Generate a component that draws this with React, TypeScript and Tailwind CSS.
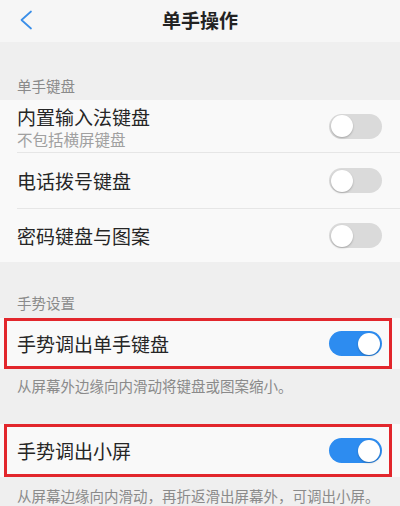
import React from 'react';

const font = { fontFamily: '"Noto Sans CJK SC", "Noto Sans", sans-serif' };

function Toggle({ on }: { on: boolean }) {
  return (
    <div
      className={`relative w-[53px] h-[25px] rounded-full flex items-center px-[2px] ${
        on ? 'bg-[#2d8cf0] justify-end' : 'bg-[#dadada] justify-start'
      }`}
    >
      <div className="w-[22px] h-[22px] rounded-full bg-white shadow-[0_1px_2px_rgba(0,0,0,0.25)]" />
    </div>
  );
}

function GestureRow({ label, heightClass }: { label: string; heightClass: string }) {
  return (
    <div className={`relative ${heightClass} bg-[#f9f9f9] flex items-center justify-between pl-[17px] pr-[18px]`}>
      <span className="text-[19px] leading-[24px] text-[#262626]">{label}</span>
      <Toggle on />
      {/* annotation box */}
      <div className="absolute left-[4px] right-[8px] top-0 bottom-0 border-[3px] border-[#e2262c] pointer-events-none" />
    </div>
  );
}

export default function App() {
  return (
    <div className="w-[400px] h-[506px] overflow-hidden bg-[#efefef]" style={font}>
      {/* Header */}
      <div className="relative h-[42px] bg-[#f6f6f6] flex items-center justify-center">
        <svg className="absolute left-[18px] top-[10px] w-[16px] h-[20px]" viewBox="0 0 16 20" fill="none">
          <polyline points="13,1.5 3.5,10 13,18.5" stroke="#3a8ee8" strokeWidth="1.7" strokeLinecap="round" strokeLinejoin="round" />
        </svg>
        <span className="text-[19px] font-bold text-[#222] leading-[24px] -mt-[2px]">单手操作</span>
      </div>

      {/* 单手键盘 */}
      <div className="h-[58px] flex items-end pl-[17px] pb-[4px]">
        <span className="text-[14.5px] leading-[20px] text-[#8a8a8a]">单手键盘</span>
      </div>

      <div className="bg-[#f9f9f9]">
        <div className="h-[53px] flex">
          <div className="flex-1 ml-[17px] flex items-center justify-between pr-[18px] border-b border-[#e6e6e6]">
            <div className="flex flex-col pt-[4px]">
              <span className="text-[19px] leading-[22px] text-[#262626]">内置输入法键盘</span>
              <span className="text-[15.5px] leading-[22px] text-[#a0a0a0]">不包括横屏键盘</span>
            </div>
            <Toggle on={false} />
          </div>
        </div>
        <div className="h-[56px] flex">
          <div className="flex-1 ml-[17px] flex items-center justify-between pr-[18px] border-b border-[#e6e6e6]">
            <span className="text-[19px] leading-[24px] text-[#262626]">电话拨号键盘</span>
            <Toggle on={false} />
          </div>
        </div>
        <div className="h-[53px] flex">
          <div className="flex-1 ml-[17px] flex items-center justify-between pr-[18px]">
            <span className="text-[19px] leading-[24px] text-[#262626]">密码键盘与图案</span>
            <Toggle on={false} />
          </div>
        </div>
      </div>

      {/* 手势设置 */}
      <div className="h-[56px] flex items-end pl-[17px] pb-[5px]">
        <span className="text-[14.5px] leading-[20px] text-[#8a8a8a]">手势设置</span>
      </div>

      <GestureRow label="手势调出单手键盘" heightClass="h-[51px]" />

      <div className="h-[55px] pl-[17px] pt-[7px]">
        <p className="text-[14.5px] leading-[20px] text-[#8a8a8a]">从屏幕外边缘向内滑动将键盘或图案缩小。</p>
      </div>

      <GestureRow label="手势调出小屏" heightClass="h-[53px]" />

      <div className="pl-[17px] pt-[9px]">
        <p className="text-[14.5px] leading-[20px] text-[#8a8a8a] whitespace-nowrap">从屏幕边缘向内滑动，再折返滑出屏幕外，可调出小屏。</p>
      </div>
    </div>
  );
}
